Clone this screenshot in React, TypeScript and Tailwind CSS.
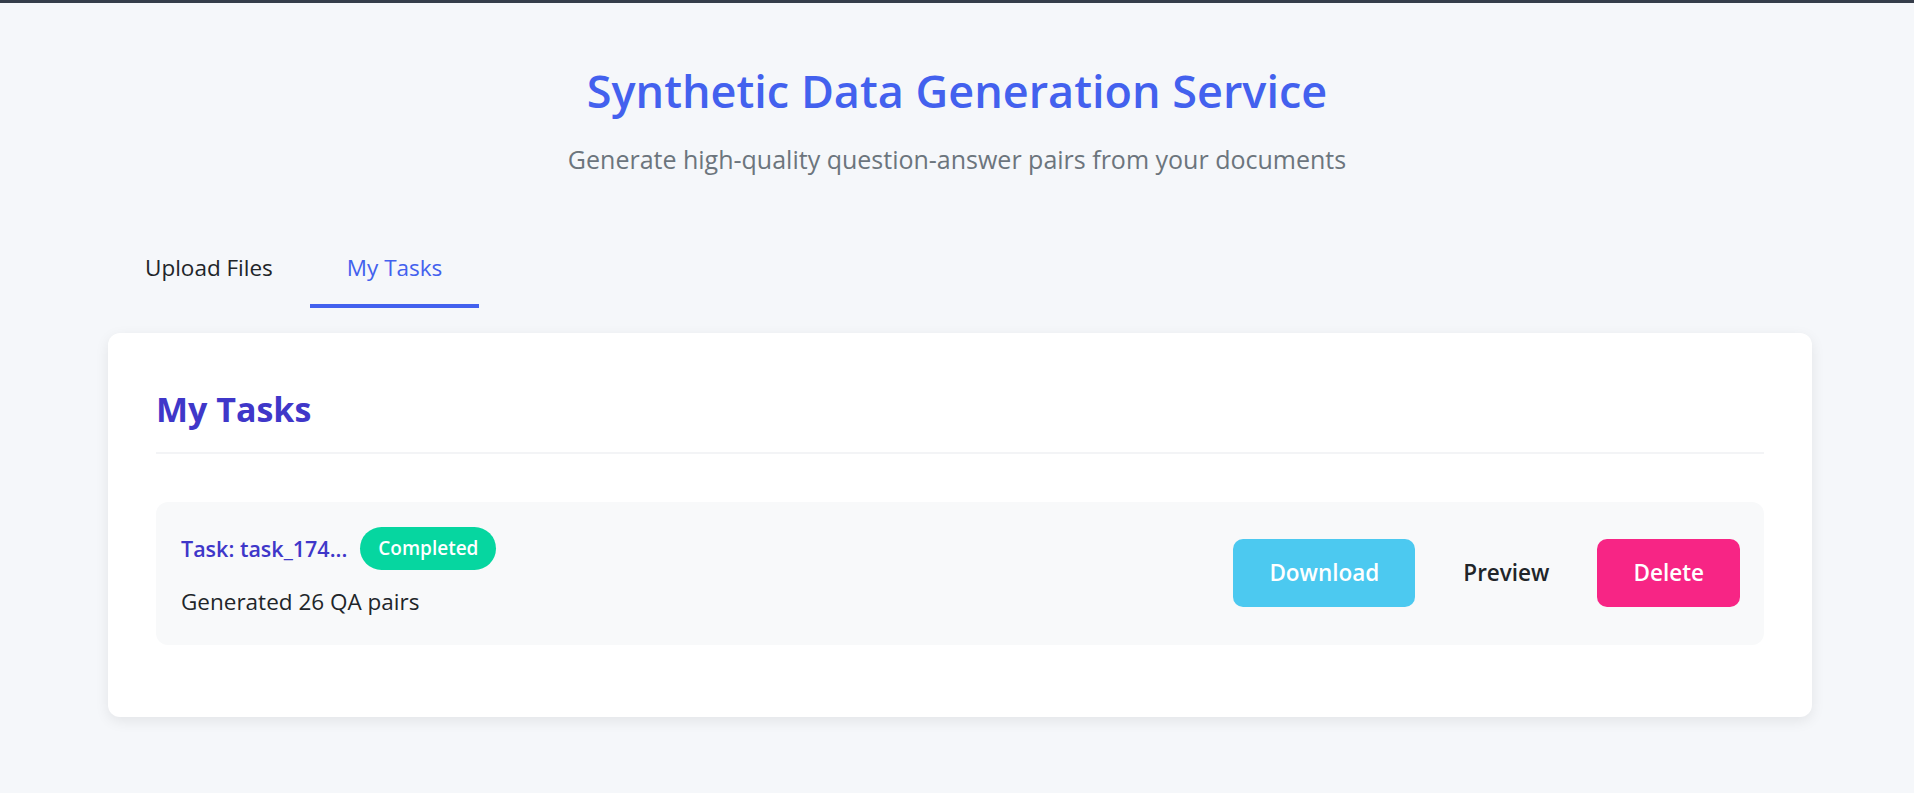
export default function App() {
  const tasks = [{ id: 'task_174...', status: 'Completed', pairs: 26 }];

  return (
    <div className="min-h-screen bg-[#f5f7fa] border-t-[3px] border-[#353d4a] font-['Open_Sans',sans-serif] text-[#212529]">
      {/* Header */}
      <header className="text-center pt-[63px]">
        <h1 className="text-[45px] leading-[50px] font-semibold text-[#4361ee]">
          Synthetic Data Generation Service
        </h1>
        <p className="mt-[27px] text-[25px] leading-[32px] text-[#6c757d]">
          Generate high-quality question-answer pairs from your documents
        </p>
      </header>

      <div className="pl-[108px] pr-[102px]">
        {/* Tabs */}
        <nav className="mt-[57px] flex">
          <button className="px-[37px] pt-[21px] pb-[21px] border-b-4 border-transparent text-[22.5px] leading-[30px] text-[#212529]">
            Upload Files
          </button>
          <button className="px-[37px] pt-[21px] pb-[21px] border-b-4 border-[#4361ee] text-[22.5px] leading-[30px] font-medium text-[#4361ee]">
            My Tasks
          </button>
        </nav>

        {/* Tasks card */}
        <section className="mt-[25px] bg-white rounded-xl shadow-[0_4px_14px_rgba(0,0,0,0.08)] pt-[55px] px-[48px] pb-[72px]">
          <h2 className="text-[34px] leading-[42px] font-bold text-[#3f37c9] pb-[22px] border-b-2 border-[#f3f4f6]">
            My Tasks
          </h2>

          <div className="mt-[48px] flex flex-col gap-4">
            {tasks.map((task) => (
              <div
                key={task.id}
                className="flex items-center justify-between bg-[#f8f9fa] rounded-xl pl-[25px] pr-[24px] pt-[25px] pb-[29px]"
              >
                <div>
                  <div className="flex items-center gap-[13px]">
                    <span className="text-[21.5px] leading-[28px] font-semibold text-[#3f37c9]">
                      Task: {task.id}
                    </span>
                    <span className="h-[43px] px-[18px] inline-flex items-center rounded-full bg-[#06d6a0] text-white text-[19px] font-semibold">
                      {task.status}
                    </span>
                  </div>
                  <p className="mt-[18px] text-[22.5px] leading-[28px] text-[#212529]">
                    Generated {task.pairs} QA pairs
                  </p>
                </div>

                <div className="flex items-center gap-[12px] pt-[3px]">
                  <button className="h-[68px] px-[36px] rounded-[10px] bg-[#4cc9f0] text-white text-[22.5px] font-semibold">
                    Download
                  </button>
                  <button className="h-[68px] px-[36px] rounded-[10px] bg-transparent text-[#212529] text-[22.5px] font-semibold">
                    Preview
                  </button>
                  <button className="h-[68px] px-[36px] rounded-[10px] bg-[#f72585] text-white text-[22.5px] font-semibold">
                    Delete
                  </button>
                </div>
              </div>
            ))}
          </div>
        </section>
      </div>
    </div>
  );
}
